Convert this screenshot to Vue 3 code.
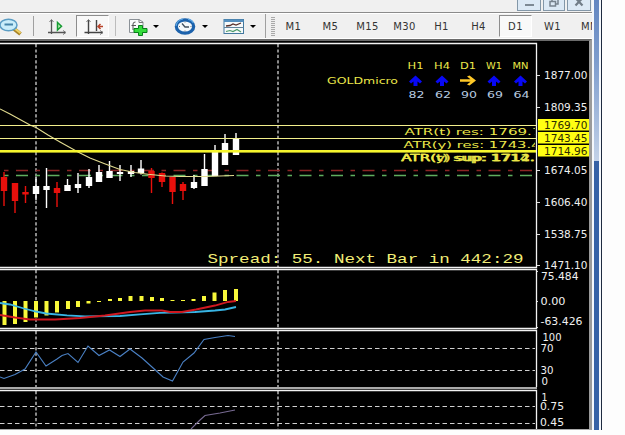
<script setup>
const periods = ['M1', 'M5', 'M15', 'M30', 'H1', 'H4', 'D1', 'W1', 'MN']
const activePeriod = 'D1'

// x, wick top, body top, body bottom, wick bottom, rising
const candles = [
  [4, 172, 177, 191, 206, false],
  [15, 183, 183, 201, 213, false],
  [25.5, 186, 192, 194.5, 203, false],
  [36, 177, 186, 194, 200, true],
  [46.5, 168, 186, 190, 208, true],
  [57, 182, 188, 193, 207, false],
  [67.5, 179, 185, 191, 191, true],
  [78, 173, 184, 188, 193, true],
  [89, 169, 177, 186, 188, true],
  [99, 165, 172, 182, 182, true],
  [109.5, 161, 171, 178, 178, true],
  [120, 165, 172, 174, 181, true],
  [131, 165, 171, 174, 177, true],
  [141, 160, 168.5, 173, 174.5, true],
  [151.5, 168, 171, 178, 193, false],
  [162, 172.5, 173, 182, 187, false],
  [172.5, 177, 177, 192, 204, false],
  [183, 182, 184, 191, 200, false],
  [194, 175, 182, 188, 189, true],
  [204.5, 154, 169, 186, 186, true],
  [215, 145, 152, 176, 176, true],
  [225, 134, 143, 165, 165, true],
  [236, 133, 139, 155, 155, true]
]

const histogram = [
  [4.5, 325], [15, 324], [25.5, 322], [36, 317.5], [46.5, 315.5], [57, 312.5],
  [68, 309], [78, 307], [88.5, 303.5], [99, 302], [110, 299], [120, 298],
  [130.5, 296], [141.5, 296], [152, 297], [162, 298], [172.5, 300], [183, 300],
  [193.5, 299], [204, 296], [214.5, 292.5], [225, 290], [236, 289]
]

const zeroLine = 301

const priceLabels = [
  { text: '1877.00', y: 79 },
  { text: '1809.35', y: 110.5 },
  { text: '1674.05', y: 174 },
  { text: '1606.40', y: 205.5 },
  { text: '1538.75', y: 237.5 },
  { text: '1471.10', y: 268.5 }
]

const levelLabels = [
  { text: '1769.70', top: 119 },
  { text: '1743.45', top: 132 },
  { text: '1714.96', top: 145 }
]

const trends = [
  { period: 'H1', value: 82, x: 415.5, dir: 'up' },
  { period: 'H4', value: 62, x: 442, dir: 'up' },
  { period: 'D1', value: 90, x: 468, dir: 'right' },
  { period: 'W1', value: 69, x: 494, dir: 'up' },
  { period: 'MN', value: 64, x: 520.5, dir: 'up' }
]

const separators = [36, 278]
</script>

<template>
  <div class="terminal">
    <div class="main">
      <header class="titlebar">
        <span class="win-btn">
          <svg width="24" height="12"><rect x="8" y="4" width="9" height="2" fill="#7d8994" /></svg>
        </span>
        <span class="win-btn">
          <svg width="22" height="12">
            <path d="M9 1V-1H15V4H13M7 1.5H12.5V6H7Z" fill="none" stroke="#77838e" stroke-width="1.5" />
          </svg>
        </span>
        <span class="win-btn">
          <svg width="24" height="12"><path d="M8.500 -2L15.500 5.500M15.500 -2L8.500 5.500" stroke="#717d88" stroke-width="2.200" /></svg>
        </span>
      </header>

      <nav class="toolbar">
        <svg class="icon zoom-out" width="22" height="24" viewBox="0 14 22 24">
          <path d="M13.500 28.500L20.500 34" stroke="#a98427" stroke-width="4" />
          <path d="M14 28L20.500 33" stroke="#f1d264" stroke-width="2.200" />
          <ellipse cx="8.500" cy="25" rx="8.500" ry="5.800" fill="#c9edfa" stroke="#5b9dc4" stroke-width="1.500" />
          <path d="M4.500 24.500H13" stroke="#4585aa" stroke-width="2" />
        </svg>
        <i class="sep"></i>
        <svg class="icon scroll" width="20" height="24" viewBox="47 14 20 24">
          <path d="M51.500 20V34M48 32.500H65" fill="none" stroke="#555" stroke-width="1.300" />
          <path d="M49.500 22L51.500 19.500L53.500 22M63 30.500L66 32.500L63 34.500" fill="none" stroke="#777" />
          <path d="M57.500 22.500L61.500 26.300L57.500 30Z" fill="#b9efb5" stroke="#169b32" stroke-width="1.500" />
        </svg>
        <span class="pressed">
          <svg width="31" height="20" viewBox="77 16 31 20">
            <path d="M88.500 20V34M84.500 32.500H103M96.500 20V31" fill="none" stroke="#444" stroke-width="1.400" />
            <path d="M86.500 22L88.500 19.500L90.500 22M100 30.500L103 32.500L100 34.500" fill="none" stroke="#777" />
            <path d="M97.500 26.500H103M100.500 24L98 26.500L100.500 29" fill="none" stroke="#b8432b" stroke-width="1.500" />
          </svg>
        </span>
        <i class="sep light"></i>
        <svg class="icon add" width="22" height="24" viewBox="127 14 22 24">
          <path d="M129.500 19.500H139L143 22V32.500H129.500Z" fill="#fafafa" stroke="#8b9197" />
          <path d="M139 19.500V22.500H143" fill="none" stroke="#777" />
          <path d="M133 30V24Q133 22 135.500 22M131.500 25.500H136" fill="none" stroke="#555" />
          <path d="M138.500 25.500H142.500V28.500H147V32.500H142.500V35.500H138.500V32.500H134V28.500H138.500Z" fill="#35dc3c" stroke="#087e1a" />
        </svg>
        <i class="caret"></i>
        <svg class="icon clock" width="22" height="24" viewBox="174 14 22 24">
          <ellipse cx="185" cy="26.500" rx="8.700" ry="6.700" fill="#f4f8fb" stroke="#1c62ac" stroke-width="3.200" />
          <path d="M176 26Q177 20 183 19M188 19.200Q192 20 193.500 23" fill="none" stroke="#5fa8e5" stroke-width="1.200" />
          <path d="M182 23.500L185 27H189" fill="none" stroke="#41505f" stroke-width="1.300" />
          <path d="M185 21.500V22.500M185 30.500V31.500M179 26.500H180M190.500 26.500H191.500" stroke="#777" />
        </svg>
        <i class="caret"></i>
        <svg class="icon template" width="22" height="24" viewBox="223 14 22 24">
          <rect x="224" y="19.500" width="19.500" height="14" fill="#f7fafb" stroke="#43789f" />
          <rect x="224" y="19.500" width="19.500" height="2.500" fill="#558fbf" />
          <path d="M224 27.500H243.500" stroke="#62839c" />
          <path d="M226 26L230 25.500L233 24L236 25L241 23" fill="none" stroke="#59302a" stroke-width="1.300" />
          <path d="M226 31.500L230 30.500L233 31.500L237 29.500L241 32" fill="none" stroke="#4c9a68" stroke-width="1.200" />
        </svg>
        <i class="caret"></i>
        <i class="sep end"></i>
        <i class="grip"></i>
        <div class="periods">
          <span v-for="p in periods" :key="p" class="period" :class="{ active: p === activePeriod }">{{ p }}</span>
        </div>
      </nav>

      <section class="workspace">
        <svg class="pane" width="589" height="228" viewBox="0 41 589 228">
          <line v-for="x in separators" :key="x" class="separator" :x1="x" :x2="x" y1="44" y2="267" />
          <path class="frame" d="M0 43.500H536.500V267.500H0" />

          <path d="M0 170.500H535" class="ask" />
          <path d="M0 175.500H535" class="bid" />

          <g v-for="c in candles" :key="c[0]" :class="c[5] ? 'rise' : 'fall'">
            <rect :x="c[0] - 0.7" :y="c[1]" width="1.400" :height="c[4] - c[1]" />
            <rect :x="c[0] - 3.200" :y="c[2]" width="6.400" :height="c[3] - c[2]" />
          </g>

          <polyline
            class="average"
            points="0,109 10,114 20,119.500 30,125 36,127.500 48,135 60,142 78,152 90,158 104,163.500 120,169.500 135,172.500 148,174.300 165,176 180,176.500 205,176.500 234,175.500"
          />
          <path d="M0 125.500H536M0 138.500H536" class="level" />
          <rect x="0" y="150" width="536" height="2.600" fill="#f6f62e" />

          <text class="label" x="327" y="84" textLength="71" lengthAdjust="spacingAndGlyphs">GOLDmicro</text>
          <g v-for="t in trends" :key="t.period">
            <text class="label" text-anchor="middle" :x="t.x" y="69" textLength="16" lengthAdjust="spacingAndGlyphs">{{ t.period }}</text>
            <path
              v-if="t.dir === 'up'"
              :transform="`translate(${t.x} 81)`"
              d="M0 -5.500L6.500 0.500L4.500 2.500L2 0.500V5H-2V0.500L-4.500 2.500L-6.500 0.500Z"
              fill="#0808f5"
            />
            <path
              v-else
              :transform="`translate(${t.x} 80.500)`"
              d="M-8 -1.300H2.500L-1 -4L1.500 -5L8 0L1.500 5L-1 4L2.500 1.300H-8Z"
              fill="#ffc928"
            />
            <text class="score" text-anchor="middle" :x="t.x + 1" y="98" textLength="16" lengthAdjust="spacingAndGlyphs">{{ t.value }}</text>
          </g>

          <svg x="390" y="120" width="145" height="46" viewBox="390 120 145 46">
            <text class="label" x="404.500" y="134.500" textLength="137" lengthAdjust="spacingAndGlyphs">ATR(t) res: 1769.7</text>
            <text class="label" x="403.500" y="147.500" textLength="137" lengthAdjust="spacingAndGlyphs">ATR(y) res: 1743.4</text>
            <text class="label double" x="401" y="161" textLength="133.500" lengthAdjust="spacingAndGlyphs">ATR(t) sup: 1714.</text>
            <text class="label double" x="401.500" y="161" textLength="133.500" lengthAdjust="spacingAndGlyphs">ATR(y) sup: 1712.</text>
          </svg>
          <text class="spread" x="207.500" y="263" textLength="316" lengthAdjust="spacingAndGlyphs">Spread: 55. Next Bar in 442:29</text>

          <g v-for="l in priceLabels" :key="l.text">
            <path class="tick" :d="`M537 ${Math.round(l.y - 4) + 0.500}H540`" />
            <text class="axis" x="544" :y="l.y" textLength="43.500" lengthAdjust="spacingAndGlyphs">{{ l.text }}</text>
          </g>
          <g v-for="l in levelLabels" :key="l.text">
            <rect x="538" :y="l.top" width="51" height="11.500" fill="#ffff12" />
            <text class="axis dark" x="544" :y="l.top + 9.500" textLength="43.500" lengthAdjust="spacingAndGlyphs">{{ l.text }}</text>
          </g>
        </svg>

        <svg class="pane" width="589" height="60" viewBox="0 269 589 60">
          <line v-for="x in separators" :key="x" class="separator" :x1="x" :x2="x" y1="270" y2="328" />
          <path class="frame" d="M0 269.500H536.500V328.500H0" />
          <rect
            v-for="h in histogram"
            :key="h[0]"
            :x="h[0] - 2"
            :y="Math.min(h[1], zeroLine)"
            width="4"
            :height="Math.abs(h[1] - zeroLine)"
            fill="#f8f83a"
          />
          <polyline
            class="signal"
            stroke="#38b4e4"
            points="0,303 10,304.500 24,308.500 36,311.500 46,313.500 67,315.300 85,316.300 120,316 140,314.300 160,312.800 195,312 215,310.500 225,309.500 236,307"
          />
          <polyline
            class="signal"
            stroke="#d01820"
            points="0,315 15,317.500 30,319.500 55,319.500 80,318 105,315.500 130,312 145,310.500 162,310.500 170,312 182,312 196,309.500 215,305.500 228,302 236,301"
          />
          <path class="tick" d="M537 271.500H538M537 301.500H538M537 327.500H538" />
          <text class="axis" x="541" y="280" textLength="37.500" lengthAdjust="spacingAndGlyphs">75.484</text>
          <text class="axis" x="540.500" y="304.500" textLength="25" lengthAdjust="spacingAndGlyphs">0.00</text>
          <text class="axis" x="540.500" y="325" textLength="42" lengthAdjust="spacingAndGlyphs">-63.426</text>
        </svg>

        <svg class="pane" width="589" height="59" viewBox="0 330 589 59">
          <line v-for="x in separators" :key="x" class="separator" :x1="x" :x2="x" y1="331" y2="387" />
          <path class="frame" d="M0 330.500H536.500V387" />
          <rect x="0" y="387" width="537" height="2" fill="#a9a9a9" />
          <path class="grid" d="M0 348.500H535M0 370.500H535" />
          <polyline
            class="oscillator"
            points="0,377 4,378.500 15,374.500 25,369 36,352 46,366 57,359 62,355.500 68,353.500 78,362.500 88,346 99,355.500 109.500,350 120,356.500 130,349 142,358 152,367 163,377 172.500,381 183,362 194,353 204,339.500 215,337.500 228,335.500 235,336.500"
          />
          <text class="axis" x="542.500" y="340.500" textLength="19" lengthAdjust="spacingAndGlyphs">100</text>
          <text class="axis" x="540.500" y="352" textLength="13" lengthAdjust="spacingAndGlyphs">70</text>
          <text class="axis" x="540.500" y="373.500" textLength="13" lengthAdjust="spacingAndGlyphs">30</text>
          <text class="axis" x="541.500" y="385" textLength="6.500" lengthAdjust="spacingAndGlyphs">0</text>
        </svg>

        <svg class="pane" width="589" height="39" viewBox="0 390 589 39">
          <line v-for="x in separators" :key="x" class="separator" :x1="x" :x2="x" y1="391" y2="429" />
          <path class="frame" d="M0 390.500H536.500V429" />
          <path class="grid" d="M0 406.500H535M0 423.500H535" />
          <polyline class="oscillator faded" points="191,429 200,420 205,415.500 220,413 235,410" />
          <text class="axis" x="541.500" y="401" textLength="6" lengthAdjust="spacingAndGlyphs">1</text>
          <text class="axis" x="540" y="409.500" textLength="24" lengthAdjust="spacingAndGlyphs">0.75</text>
          <text class="axis" x="540" y="426" textLength="24" lengthAdjust="spacingAndGlyphs">0.45</text>
        </svg>
      </section>
    </div>
    <aside class="edge">
      <div class="glow"></div>
    </aside>
  </div>
</template>

<style scoped>
.terminal {
  display: flex;
  width: 602px;
  height: 430px;
  overflow: hidden;
}

.main {
  display: flex;
  flex-direction: column;
  width: 592px;
  overflow: hidden;
  background: #f0f0f0;
}

.titlebar {
  display: flex;
  flex: none;
  justify-content: flex-end;
  gap: 2px;
  height: 12px;
  padding-right: 1px;
  border-bottom: 1px solid #8b8b8b;
}

.win-btn {
  box-sizing: border-box;
  height: 11px;
  overflow: hidden;
  background: #dce9f5;
  border: solid #8397a8;
  border-width: 0 1px 1px;
}

.win-btn svg {
  display: block;
  margin: 0 -1px;
}

.toolbar {
  display: flex;
  flex: none;
  align-items: center;
  box-sizing: border-box;
  height: 26px;
  border-top: 1px solid #fff;
  border-bottom: 1px solid #fff;
}

.icon {
  flex: none;
}

.sep {
  flex: none;
  width: 1px;
  height: 20px;
  margin: 0 13px 0 11px;
  background: #a0a0a0;
}

.sep.light {
  margin: 0 11px 0 6px;
  background: #bcbcbc;
}

.sep.end {
  height: 24px;
  margin: 0 5px 0 9px;
}

.pressed {
  flex: none;
  width: 31px;
  height: 20px;
  margin-left: 9px;
  background: #f8f8f8;
  border: 1px solid #fff;
  border-top-color: #8d8d8d;
  border-left-color: #8d8d8d;
}

.pressed svg {
  display: block;
}

.caret {
  flex: none;
  width: 0;
  height: 0;
  margin: 1px 0 0 4px;
  border: solid transparent;
  border-width: 3px 3.5px 0;
  border-top-color: #000;
}

.clock {
  margin-left: 15px;
}

.clock + .caret {
  margin-left: 6px;
}

.template {
  margin-left: 15px;
}

.template + .caret {
  margin-left: 5px;
}

.grip {
  flex: none;
  width: 4px;
  height: 19px;
  margin-right: 2px;
  background: repeating-linear-gradient(#a9a9a9 0 1px, #eee 1px 2px);
}

.periods {
  display: flex;
  gap: 4px;
}

.period {
  display: flex;
  flex: none;
  align-items: center;
  justify-content: center;
  box-sizing: border-box;
  width: 33px;
  height: 22px;
  padding-top: 1px;
  color: #333;
  font-family: "DejaVu Sans", sans-serif;
  font-size: 10px;
  letter-spacing: 0.4px;
  border: 1px solid transparent;
}

.period.active {
  background: #f9f9f9;
  border-color: #8d8d8d #fff #fff #8d8d8d;
}

.workspace {
  display: flex;
  flex: none;
  flex-direction: column;
  gap: 1px;
  box-sizing: border-box;
  width: 592px;
  height: 391px;
  overflow: hidden;
  background: #000;
  border-top: 2px solid #6b6b6b;
  border-right: 3px solid #9a9a9a;
  border-bottom: 1px solid #aaa;
}

.pane {
  display: block;
  flex: none;
  overflow: visible;
}

.pane:first-child {
  margin-bottom: -1px;
}

.frame {
  fill: none;
  stroke: #f2f2f2;
  stroke-width: 1.3;
}

.separator {
  stroke: #c4c4c4;
  stroke-width: 1.4;
  stroke-dasharray: 3.2 2.2;
}

.grid {
  stroke: #d0d0d0;
  stroke-dasharray: 4.5 3;
}

.tick {
  stroke: #ddd;
}

.ask,
.bid {
  stroke: #8c2424;
  stroke-width: 1.3;
  stroke-dasharray: 12 7.5 4.5 7.5;
  stroke-dashoffset: 15.5;
}

.bid {
  stroke: #5fae5f;
}

.rise {
  fill: #fff;
}

.fall {
  fill: #e8100c;
}

.average {
  fill: none;
  stroke: #e2dc90;
  stroke-width: 1.1;
}

.level {
  stroke: #f3ef8c;
  stroke-width: 1.1;
}

.signal {
  fill: none;
  stroke-width: 1.8;
}

.oscillator {
  fill: none;
  stroke: #4a80c4;
  stroke-width: 1.1;
}

.oscillator.faded {
  stroke: #776a92;
}

.label,
.score,
.axis {
  fill: #ece84a;
  font-family: "DejaVu Sans", sans-serif;
  font-size: 9.5px;
}

.label.double {
  stroke: #ece84a;
  stroke-width: 0.3;
}

.score {
  fill: #b9cce0;
}

.axis {
  fill: #f0f0f0;
  font-size: 10px;
}

.axis.dark {
  fill: #2c2c00;
}

.spread {
  fill: #f2ee78;
  font-family: "Liberation Mono", monospace;
  font-size: 13.5px;
}

.edge {
  box-sizing: border-box;
  flex: none;
  width: 10px;
  padding: 0 2px 0 2px;
  background: #f5f8fc;
  border-right: 1px solid #1e2b40;
}

.glow {
  width: 5px;
  height: 430px;
  background: linear-gradient(#6487c1 0, #7d9ccd 60px, #c3d2e8 161px, #3762a6 161px);
}
</style>

<style>
body {
  background: #fdfdfd;
}
</style>
